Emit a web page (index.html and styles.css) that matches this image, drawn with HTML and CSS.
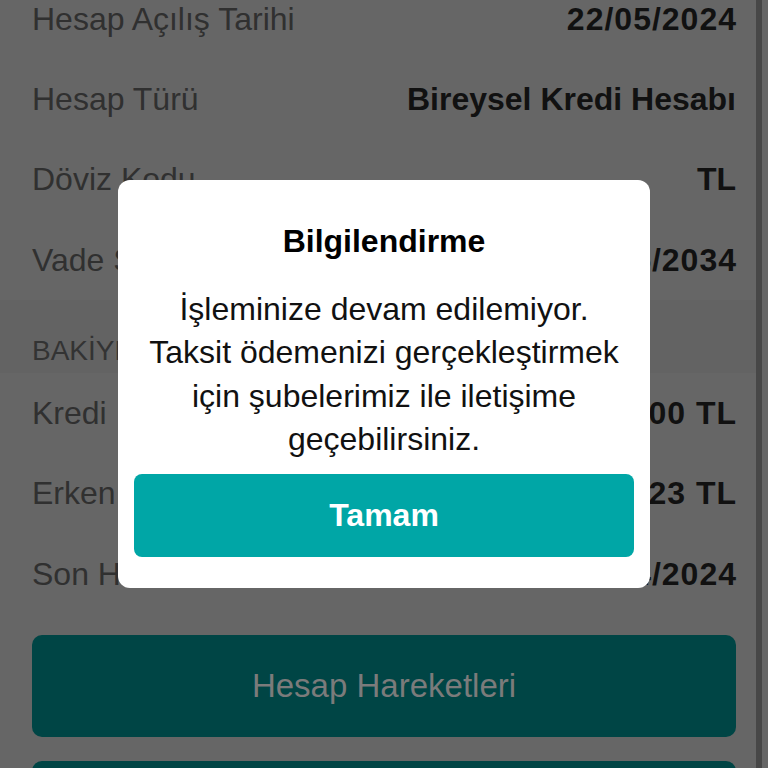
FILE: index.html
```html
<!DOCTYPE html>
<html lang="tr">
<head>
<meta charset="utf-8">
<title>Hesap Detayı</title>
<link rel="stylesheet" href="styles.css">
</head>
<body>
<div class="screen">
  <main class="content">
    <section class="list list-top">
      <div class="row"><span class="label">Hesap Açılış Tarihi</span><span class="value num">22/05/2024</span></div>
      <div class="row"><span class="label">Hesap Türü</span><span class="value">Bireysel Kredi Hesabı</span></div>
      <div class="row"><span class="label">Döviz Kodu</span><span class="value">TL</span></div>
      <div class="row"><span class="label">Vade Sonu</span><span class="value num">22/05/2034</span></div>
    </section>
    <div class="section-title">BAKİYE</div>
    <section class="list">
      <div class="row"><span class="label">Kredi</span><span class="value num">100.000,00 TL</span></div>
      <div class="row"><span class="label">Erken</span><span class="value num">85.432,23 TL</span></div>
      <div class="row"><span class="label">Son H.</span><span class="value num">22/04/2024</span></div>
    </section>
    <div class="actions">
      <button class="action" type="button">Hesap Hareketleri</button>
      <button class="action" type="button" aria-label="Taksit Öde"></button>
    </div>
  </main>
  <div class="scroll-edge"></div>
</div>

<div class="overlay">
  <div class="dialog" role="alertdialog">
    <h2 class="dialog-title">Bilgilendirme</h2>
    <p class="dialog-text">İşleminize devam edilemiyor.<br>Taksit ödemenizi gerçekleştirmek<br>için şubelerimiz ile iletişime<br>geçebilirsiniz.</p>
    <button class="dialog-button" type="button">Tamam</button>
  </div>
</div>
</body>
</html>
```

FILE: styles.css
```css
html, body {
  margin: 0;
  width: 768px;
  height: 768px;
  overflow: hidden;
  background: #666666;
  font-family: "Liberation Sans", Arial, Helvetica, sans-serif;
}

.screen {
  display: flex;
  height: 768px;
}

.content {
  width: 756px;
  flex: none;
}

.list-top {
  margin-top: -21px;
}

.row {
  height: 80.33px;
  display: flex;
  align-items: center;
  justify-content: space-between;
  padding: 0 20px 0 32px;
}

.label {
  font-size: 32px;
  color: #303030;
  white-space: nowrap;
}

.value {
  font-size: 32px;
  font-weight: 700;
  color: #111111;
  white-space: nowrap;
}

.num {
  letter-spacing: 1px;
  margin-right: -1px;
}

.section-title {
  height: 73px;
  box-sizing: border-box;
  padding: 35px 32px 0;
  background: #636363;
  font-size: 28px;
  line-height: 32px;
  color: #333333;
  white-space: nowrap;
}

.actions {
  display: flex;
  flex-direction: column;
  gap: 24px;
  padding: 21px 20px 0 32px;
}

.action {
  height: 102px;
  flex: none;
  border: 0;
  border-radius: 10px;
  background: #004545;
  color: #7b7b7b;
  font-family: "Liberation Sans", Arial, sans-serif;
  font-size: 33px;
}

.scroll-edge {
  width: 6px;
  flex: none;
  background: #474747;
}

.overlay {
  position: fixed;
  inset: 0;
  display: flex;
  align-items: center;
  justify-content: center;
}

.dialog {
  width: 532px;
  box-sizing: border-box;
  padding: 42px 16px 31px;
  background: #ffffff;
  border-radius: 12px;
  display: flex;
  flex-direction: column;
  align-items: center;
  text-align: center;
}

.dialog-title {
  margin: 0;
  font-size: 32px;
  line-height: 38px;
  font-weight: 700;
  color: #000000;
}

.dialog-text {
  margin: 28px 0 0;
  font-size: 32px;
  line-height: 43.3px;
  color: #111111;
}

.dialog-button {
  margin-top: 13px;
  width: 100%;
  height: 83px;
  border: 0;
  border-radius: 8px;
  background: #00a6a6;
  color: #ffffff;
  font-family: "Liberation Sans", Arial, sans-serif;
  font-size: 32px;
  font-weight: 700;
}
```
